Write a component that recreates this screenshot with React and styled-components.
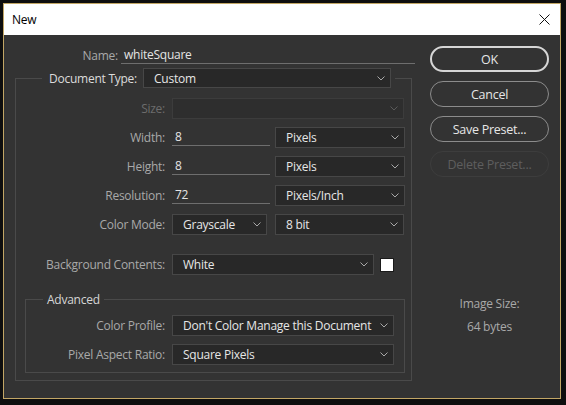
import React from 'react'
import styled, { createGlobalStyle } from 'styled-components'

const GlobalStyle = createGlobalStyle`
  html, body {
    margin: 0;
    padding: 0;
    background: #0e0e0e;
  }
  body {
    font-family: "Open Sans", "Noto Sans", sans-serif;
    font-size: 12px;
    letter-spacing: -0.25px;
  }
  * { box-sizing: border-box; }
`

const Screen = styled.div`
  width: 566px;
  height: 405px;
  padding: 3px 0 0 3px;
`

const Window = styled.div`
  width: 558px;
  height: 396px;
  border: 1px solid #c2a665;
  background: #333333;
  display: flex;
  flex-direction: column;
`

const TitleBar = styled.div`
  height: 31px;
  background: #ffffff;
  display: flex;
  align-items: center;
  justify-content: space-between;
  padding: 0 10px 0 8px;
  color: #000;
  font-size: 12px;
`

const Body = styled.div`
  flex: 1;
  display: flex;
`

const LeftColumn = styled.div`
  width: 426px;
  padding-top: 10px;
`

const RightColumn = styled.div`
  display: flex;
  flex-direction: column;
  padding-top: 11px;
  gap: 9px;
`

const NameRow = styled.div`
  display: flex;
  align-items: center;
  height: 20px;
  gap: 3px;
`

const Label = styled.div`
  width: ${p => p.w}px;
  text-align: right;
  white-space: nowrap;
  color: ${p => (p.disabled ? '#6c6c6c' : p.bright ? '#dcdcdc' : '#a9a9a9')};
  flex-shrink: 0;
`

const TextField = styled.div`
  width: ${p => p.w}px;
  height: 19px;
  align-self: flex-start;
  display: flex;
  align-items: center;
  padding-left: 3px;
  color: #e4e4e4;
  border-bottom: 1px solid #6e6e6e;
`

const Group = styled.fieldset`
  margin: ${p => p.m};
  padding: ${p => p.pad};
  border: 1px solid #4a4a4a;
  width: ${p => p.w}px;
  min-width: 0;
`

const Legend = styled.legend`
  margin-left: ${p => p.ml}px;
  padding: 0 4px;
  display: flex;
  align-items: center;
  gap: 6px;
  color: #d6d6d6;
`

const Rows = styled.div`
  display: flex;
  flex-direction: column;
  gap: 8px;
  padding-top: ${p => p.pt || 0}px;
`

const Row = styled.div`
  display: flex;
  align-items: center;
  gap: 7px;
  height: 21px;
  margin-top: ${p => p.mt || 0}px;
`

const Controls = styled.div`
  display: flex;
  align-items: center;
  gap: ${p => p.gap || 5}px;
  height: 21px;
`

const SelectBox = styled.div`
  width: ${p => p.w}px;
  height: ${p => p.h || 21}px;
  display: flex;
  align-items: center;
  justify-content: space-between;
  padding: 0 5px 0 10px;
  background: ${p => (p.disabled ? '#2e2e2e' : '#282828')};
  border: 1px solid ${p => (p.disabled ? '#3c3c3c' : '#474747')};
  color: #e6e6e6;
  white-space: nowrap;
`

const Chevron = styled.svg`
  width: 8px;
  height: 5px;
  flex-shrink: 0;
`

const Swatch = styled.div`
  width: 14px;
  height: 14px;
  background: #ffffff;
  border: 1px solid #1a1a1a;
`

const Button = styled.div`
  width: 119px;
  height: 26px;
  border-radius: 13px;
  display: flex;
  align-items: center;
  justify-content: center;
  border: ${p => (p.primary ? '2px solid #d6d6d6' : p.disabled ? '1px solid #3d3d3d' : '1px solid #8c8c8c')};
  color: ${p => (p.disabled ? '#5e5e5e' : '#e6e6e6')};
  font-size: 12.5px;
`

const SizeInfo = styled.div`
  margin-top: 110px;
  display: flex;
  flex-direction: column;
  align-items: center;
  gap: 7px;
  color: #a9a9a9;
  line-height: 16px;
`

function Select({ w, h, disabled, children }) {
  return (
    <SelectBox w={w} h={h} disabled={disabled}>
      <span>{children}</span>
      <Chevron viewBox="0 0 8 5">
        <path d="M0.5 0.5 L4 4 L7.5 0.5" fill="none" stroke={disabled ? '#5a5a5a' : '#a8a8a8'} strokeWidth="1" />
      </Chevron>
    </SelectBox>
  )
}

function CloseIcon() {
  return (
    <svg width="11" height="11" viewBox="0 0 11 11">
      <path d="M0.5 0.5 L10.5 10.5 M10.5 0.5 L0.5 10.5" stroke="#111" strokeWidth="1" />
    </svg>
  )
}

export default function App() {
  return (
    <Screen>
      <GlobalStyle />
      <Window>
        <TitleBar>
          <span>New</span>
          <CloseIcon />
        </TitleBar>
        <Body>
          <LeftColumn>
            <NameRow>
              <Label w={114}>Name:</Label>
              <TextField w={294}>whiteSquare</TextField>
            </NameRow>

            <Group m="3px 0 0 11px" pad="0 6px 7px 0" w={397}>
              <Legend ml={26}>
                <Label w={91} bright>Document Type:</Label>
                <Select w={248} h={20}>Custom</Select>
              </Legend>
              <Rows pt={10}>
                <Row>
                  <Label w={149} disabled>Size:</Label>
                  <Select w={232} disabled />
                </Row>
                <Row>
                  <Label w={149}>Width:</Label>
                  <Controls>
                    <TextField w={98}>8</TextField>
                    <Select w={130}>Pixels</Select>
                  </Controls>
                </Row>
                <Row>
                  <Label w={149}>Height:</Label>
                  <Controls>
                    <TextField w={98}>8</TextField>
                    <Select w={130}>Pixels</Select>
                  </Controls>
                </Row>
                <Row>
                  <Label w={149}>Resolution:</Label>
                  <Controls>
                    <TextField w={98}>72</TextField>
                    <Select w={130}>Pixels/Inch</Select>
                  </Controls>
                </Row>
                <Row>
                  <Label w={149}>Color Mode:</Label>
                  <Controls gap={8}>
                    <Select w={95}>Grayscale</Select>
                    <Select w={129}>8 bit</Select>
                  </Controls>
                </Row>
                <Row mt={11}>
                  <Label w={149}>Background Contents:</Label>
                  <Controls gap={6}>
                    <Select w={202}>White</Select>
                    <Swatch />
                  </Controls>
                </Row>
              </Rows>

              <Group m="16px 6px 0 9px" pad="7px 9px 7px 0" w={380}>
                <Legend ml={17}>Advanced</Legend>
                <Rows>
                  <Row>
                    <Label w={139}>Color Profile:</Label>
                    <Select w={222}>Don't Color Manage this Document</Select>
                  </Row>
                  <Row>
                    <Label w={139}>Pixel Aspect Ratio:</Label>
                    <Select w={222}>Square Pixels</Select>
                  </Row>
                </Rows>
              </Group>
            </Group>
          </LeftColumn>

          <RightColumn>
            <Button primary>OK</Button>
            <Button>Cancel</Button>
            <Button>Save Preset...</Button>
            <Button disabled>Delete Preset...</Button>
            <SizeInfo>
              <span>Image Size:</span>
              <span>64 bytes</span>
            </SizeInfo>
          </RightColumn>
        </Body>
      </Window>
    </Screen>
  )
}
